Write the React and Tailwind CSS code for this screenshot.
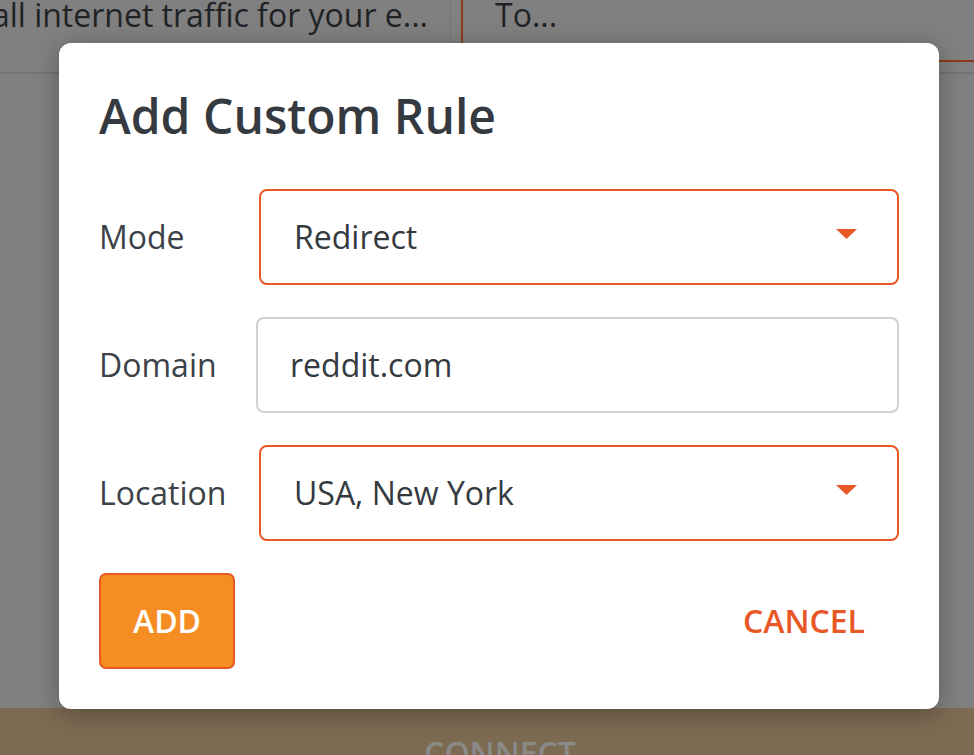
import React from "react";

function Caret() {
  return (
    <svg width="21" height="10" viewBox="0 0 21 10" className="shrink-0">
      <path d="M0 0 H21 L10.5 10 Z" fill="#e85726" />
    </svg>
  );
}

function SelectBox({ value }) {
  return (
    <div className="flex-1 h-[96px] ml-[3px] flex items-center justify-between pl-[33px] pr-[40px] border-2 border-[#e85726] rounded-[8px] bg-white">
      <span className="text-[32px] text-[#343a40]">{value}</span>
      <div className="-mt-[6px]"><Caret /></div>
    </div>
  );
}

export default function App() {
  return (
    <div
      className="relative w-[974px] h-[755px] overflow-hidden bg-[#808080] flex flex-col"
      style={{ fontFamily: '"Open Sans", "Noto Sans", sans-serif' }}
    >
      {/* background app (dimmed) */}
      <div className="h-[74px] shrink-0 flex border-b-2 border-[#747474]">
        <div className="w-[451px] shrink-0 flex justify-end overflow-hidden border-r border-[#777777] pr-[22px]">
          <span className="whitespace-nowrap text-[32px] leading-[44px] -mt-[7px] text-[#1f2326]">
            all internet traffic for your e...
          </span>
        </div>
        <div className="w-[10px] shrink-0" />
        <div className="flex-1 h-[62px] border-l-2 border-b-2 border-[#8a3a1c] pl-[32px]">
          <span className="whitespace-nowrap text-[32px] leading-[44px] -mt-[7px] block text-[#1f2326]">To...</span>
        </div>
      </div>
      <div className="flex-1" />
      <div className="h-[47px] shrink-0 bg-[#7c6a52] flex justify-center">
        <span className="pt-[23px] text-[32px] leading-[44px] font-semibold text-[#8a8a88] pl-[26px]">CONNECT</span>
      </div>

      {/* modal */}
      <div className="absolute left-[59px] top-[43px] w-[880px] bg-white rounded-[12px] shadow-[0_4px_24px_rgba(0,0,0,0.3)] pt-[41px] pb-[40px] pl-[40px] pr-[40px] flex flex-col text-[#343a40]">
        <h1 className="h-[64px] leading-[64px] text-[48px] font-semibold text-[#343a40]">Add Custom Rule</h1>
        <div className="mt-[41px] flex flex-col gap-[32px]">
          <div className="flex items-center">
            <span className="w-[157px] shrink-0 text-[32px] text-[#3c4248]">Mode</span>
            <SelectBox value="Redirect" />
          </div>
          <div className="flex items-center">
            <span className="w-[157px] shrink-0 text-[32px] text-[#3c4248]">Domain</span>
            <div className="flex-1 h-[96px] flex items-center pl-[32px] border-2 border-[#d0d0d0] rounded-[8px]">
              <span className="text-[32px] text-[#343a40]">reddit.com</span>
            </div>
          </div>
          <div className="flex items-center">
            <span className="w-[157px] shrink-0 text-[32px] text-[#3c4248]">Location</span>
            <SelectBox value="USA, New York" />
          </div>
          <div className="flex items-center justify-between">
            <button className="h-[96px] w-[136px] flex items-center justify-center bg-[#f68d22] border-2 border-[#e85726] rounded-[7px] text-white text-[32px] font-semibold">
              ADD
            </button>
            <button className="h-[96px] flex items-center justify-center pr-[34px] text-[#e85726] text-[32px] font-semibold">
              CANCEL
            </button>
          </div>
        </div>
      </div>
    </div>
  );
}
